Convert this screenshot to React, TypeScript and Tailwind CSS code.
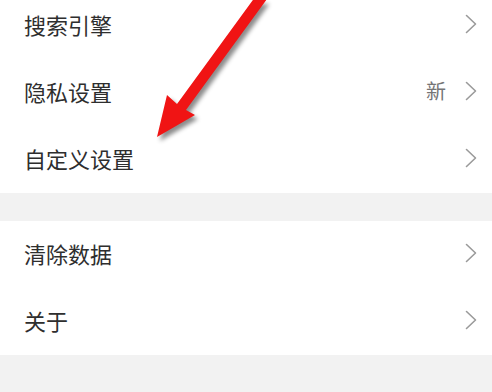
import React from "react";

const Chevron = () => (
  <svg width="12" height="20" viewBox="0 0 12 20" className="shrink-0">
    <polyline points="1.5,1.5 10.5,10 1.5,18.5" fill="none" stroke="#9a9a9a" strokeWidth="1.6" strokeLinecap="round" strokeLinejoin="round" />
  </svg>
);

const Row = ({ label, extra }: { label: string; extra?: string }) => (
  <div className="flex h-[67px] items-center bg-white pb-[3px] pl-[24px] pr-[15px]">
    <span className="flex-1 text-[22px] leading-none text-[#2e2e2e]">{label}</span>
    {extra && <span className="mr-[19px] text-[20px] leading-none text-[#757575]">{extra}</span>}
    <Chevron />
  </div>
);

export default function App() {
  return (
    <div
      className="relative h-[392px] w-[492px] overflow-hidden bg-[#f2f2f2]"
      style={{ fontFamily: '"Noto Sans CJK SC", "Noto Sans", sans-serif' }}
    >
      <div className="-mt-[8px] flex flex-col">
        <Row label="搜索引擎" />
        <Row label="隐私设置" extra="新" />
        <Row label="自定义设置" />
        <div className="h-[28px] bg-[#f2f2f2]" />
        <Row label="清除数据" />
        <Row label="关于" />
      </div>
      <svg
        className="pointer-events-none absolute left-0 top-0 drop-shadow-[3px_4px_2px_rgba(0,0,0,0.45)]"
        width="492"
        height="392"
        viewBox="0 0 492 392"
      >
        <polygon
          points="267,-1 186,110 195,115 157,137 167,95 177,104 258,-7"
          fill="#f01414"
        />
      </svg>
    </div>
  );
}
